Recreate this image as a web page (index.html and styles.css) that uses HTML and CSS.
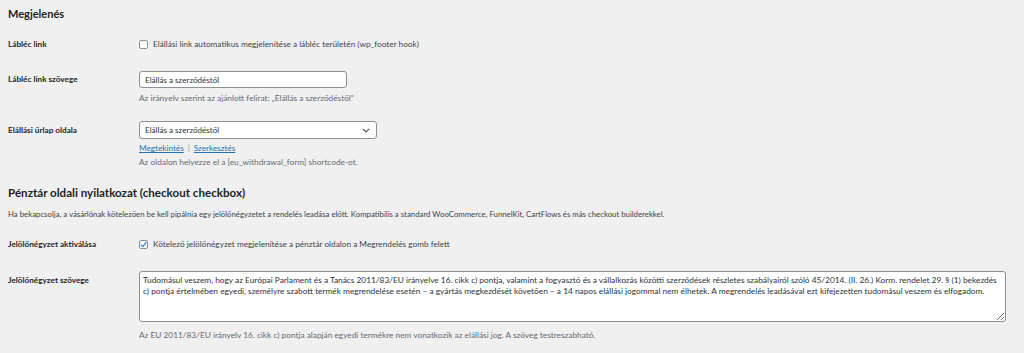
FILE: index.html
```html
<!DOCTYPE html>
<html lang="hu">
<head>
<meta charset="utf-8">
<title>Beállítások</title>
<link rel="stylesheet" href="styles.css">
</head>
<body>
<div class="wrap">
  <h2 class="section-title first">Megjelenés</h2>

  <div class="row row-check r1">
    <div class="th">Lábléc link</div>
    <div class="td">
      <label class="check"><span class="cb"></span>Elállási link automatikus megjelenítése a lábléc területén (wp_footer hook)</label>
    </div>
  </div>

  <div class="row r2">
    <div class="th th-input">Lábléc link szövege</div>
    <div class="td">
      <input class="text-input" type="text" value="Elállás a szerződéstől">
      <p class="desc d2">Az irányelv szerint az ajánlott felirat: „Elállás a szerződéstől”</p>
    </div>
  </div>

  <div class="row r3">
    <div class="th th-select">Elállási űrlap oldala</div>
    <div class="td">
      <div class="select">
        <span>Elállás a szerződéstől</span>
        <svg class="chev" width="8" height="5" viewBox="0 0 8 5"><path d="M0.8 0.8 L4 4 L7.2 0.8" fill="none" stroke="#50575e" stroke-width="1.2"/></svg>
      </div>
      <p class="links"><a href="#">Megtekintés</a><span class="sep">|</span><a href="#">Szerkesztés</a></p>
      <p class="desc d3">Az oldalon helyezze el a [eu_withdrawal_form] shortcode-ot.</p>
    </div>
  </div>

  <h2 class="section-title second">Pénztár oldali nyilatkozat (checkout checkbox)</h2>
  <p class="intro">Ha bekapcsolja, a vásárlónak kötelezően be kell pipálnia egy jelölőnégyzetet a rendelés leadása előtt. Kompatibilis a standard WooCommerce, FunnelKit, CartFlows és más checkout builderekkel.</p>

  <div class="row row-check r4">
    <div class="th">Jelölőnégyzet aktiválása</div>
    <div class="td">
      <label class="check"><span class="cb checked"><svg width="9" height="9" viewBox="0 0 9 9"><path d="M1.8 4.6 L3.8 6.6 L7.4 1.8" fill="none" stroke="#3582c4" stroke-width="1.3"/></svg></span>Kötelező jelölőnégyzet megjelenítése a pénztár oldalon a Megrendelés gomb felett</label>
    </div>
  </div>

  <div class="row r5">
    <div class="th th-area">Jelölőnégyzet szövege</div>
    <div class="td td-wide">
      <textarea class="area" rows="4">Tudomásul veszem, hogy az Európai Parlament és a Tanács 2011/83/EU irányelve 16. cikk c) pontja, valamint a fogyasztó és a vállalkozás közötti szerződések részletes szabályairól szóló 45/2014. (II. 26.) Korm. rendelet 29. § (1) bekezdés c) pontja értelmében egyedi, személyre szabott termék megrendelése esetén – a gyártás megkezdését követően – a 14 napos elállási jogommal nem élhetek. A megrendelés leadásával ezt kifejezetten tudomásul veszem és elfogadom.</textarea>
      <p class="desc d5">Az EU 2011/83/EU irányelv 16. cikk c) pontja alapján egyedi termékre nem vonatkozik az elállási jog. A szöveg testreszabható.</p>
    </div>
  </div>
</div>
</body>
</html>
```

FILE: styles.css
```css
html, body {
  margin: 0;
  padding: 0;
  background: #f0f0f1;
}
body {
  font-family: "Segoe UI", Lato, "Noto Sans", sans-serif;
  font-size: 8.3px;
  color: #3c434a;
  width: 1024px;
  height: 353px;
  overflow: hidden;
}
.wrap {
  padding: 0 18px 0 8px;
}
.section-title {
  margin: 0;
  font-size: 11.3px;
  line-height: 14px;
  font-weight: 700;
  color: #1d2327;
}
.section-title.first {
  padding-top: 7px;
  font-size: 11px;
}
.section-title.second {
  margin-top: 18px;
  font-size: 11.6px;
}

.row {
  display: grid;
  grid-template-columns: 131px 1fr;
  align-items: start;
}
.th {
  font-weight: 700;
  color: #1d2327;
  line-height: 12px;
  font-size: 8.2px;
}
.row.r1 { margin-top: 17px; }
.row.r2 { margin-top: 21px; }
.row.r3 { margin-top: 17px; }
.row.r4 { margin-top: 18px; }
.row.r5 { margin-top: 21px; }

.th-input { line-height: 17px; }
.th-select { line-height: 18px; }
.th-area { line-height: 18px; }

.check {
  display: flex;
  align-items: center;
  line-height: 12px;
  font-size: 8.25px;
  color: #3c434a;
}
.cb {
  box-sizing: border-box;
  width: 9px;
  height: 9px;
  border: 1px solid #8c8f94;
  border-radius: 2px;
  background: #fff;
  margin: 0 5px 0 0;
  position: relative;
  flex: none;
}
.cb svg {
  position: absolute;
  left: -1px;
  top: -1px;
}

.text-input {
  box-sizing: border-box;
  display: block;
  width: 208px;
  height: 17px;
  margin: 0;
  padding: 0 5px;
  border: 1px solid #8c8f94;
  border-radius: 3px;
  background: #fff;
  font-family: inherit;
  font-size: 8.1px;
  color: #2c3338;
  outline: none;
}

.desc {
  margin: 0;
  line-height: 12px;
  color: #646970;
  font-size: 8.3px;
}
.d2 { margin-top: 4px; }
.d3 { margin-top: 2px; }
.d5 { margin-top: 7px; }

.select {
  box-sizing: border-box;
  width: 238px;
  height: 18px;
  border: 1px solid #8c8f94;
  border-radius: 3px;
  background: #fff;
  display: flex;
  align-items: center;
  justify-content: space-between;
  padding: 0 6px 0 5px;
  font-size: 8.1px;
  color: #2c3338;
}
.chev { flex: none; }

.links {
  margin: 3px 0 0;
  line-height: 12px;
  color: #646970;
  font-size: 8.2px;
}
.links a {
  color: #2271b1;
  text-decoration: underline;
}
.sep {
  margin: 0 4px;
  color: #8c8f94;
}

.intro {
  margin: 8px 0 0;
  line-height: 12px;
  font-size: 7.8px;
  color: #3c434a;
}

.area {
  box-sizing: border-box;
  display: block;
  width: 867px;
  height: 51px;
  margin: 0;
  padding: 3px 1px 3px 3px;
  border: 1px solid #8c8f94;
  border-radius: 3px;
  background: #fff;
  font-family: inherit;
  font-size: 8.32px;
  line-height: 11px;
  color: #2c3338;
  resize: vertical;
  outline: none;
  overflow: hidden;
}
```
